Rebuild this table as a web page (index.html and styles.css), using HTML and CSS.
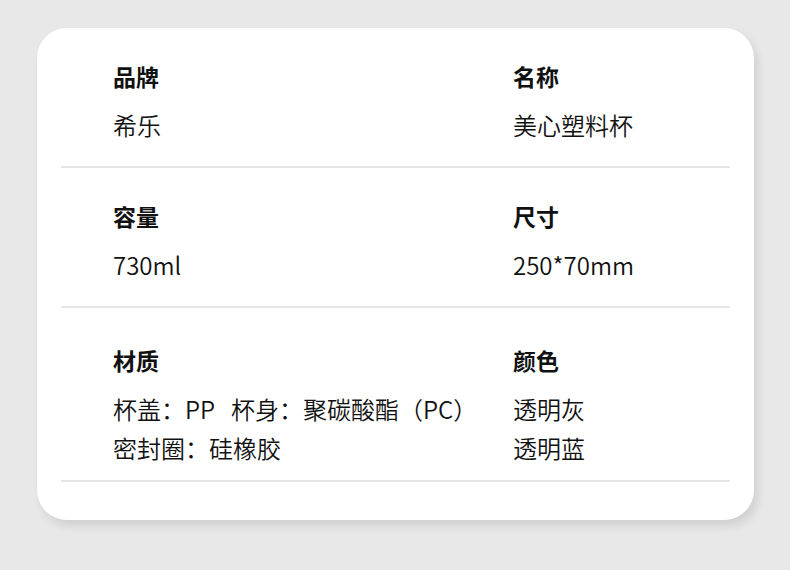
FILE: index.html
```html
<!DOCTYPE html>
<html lang="zh-CN">
<head>
<meta charset="utf-8">
<link rel="stylesheet" href="styles.css">
</head>
<body>
<div class="card">
  <section class="row row1">
    <div class="cell">
      <div class="label">品牌</div>
      <div class="value">希乐</div>
    </div>
    <div class="cell">
      <div class="label">名称</div>
      <div class="value">美心塑料杯</div>
    </div>
  </section>
  <section class="row row2">
    <div class="cell">
      <div class="label">容量</div>
      <div class="value">730ml</div>
    </div>
    <div class="cell">
      <div class="label">尺寸</div>
      <div class="value">250*70mm</div>
    </div>
  </section>
  <section class="row row3">
    <div class="cell">
      <div class="label">材质</div>
      <div class="value multi">杯盖：PP<span class="gap"></span>杯身：聚碳酸酯（PC）<br>密封圈：硅橡胶</div>
    </div>
    <div class="cell">
      <div class="label">颜色</div>
      <div class="value multi">透明灰<br>透明蓝</div>
    </div>
  </section>
</div>
</body>
</html>
```

FILE: styles.css
```css
html, body {
  margin: 0;
  padding: 0;
}
body {
  background: #e8e8e8;
  width: 790px;
  height: 570px;
  overflow: hidden;
  font-family: "Noto Sans CJK SC", "Noto Sans", sans-serif;
  color: #1a1a1a;
}
.card {
  margin: 28px 0 0 37px;
  width: 717px;
  height: 492px;
  box-sizing: border-box;
  background: #ffffff;
  border-radius: 30px;
  box-shadow: 4px 6px 10px rgba(0, 0, 0, 0.10);
  padding: 0 24px;
}
.row {
  display: grid;
  grid-template-columns: 400px 1fr;
  padding-left: 52px;
  border-bottom: 2px solid #e6e6e6;
  box-sizing: border-box;
}
.row1 {
  padding-top: 33px;
  height: 140px;
}
.row2 {
  padding-top: 33px;
  height: 140px;
}
.row3 {
  padding-top: 37px;
  height: 174px;
}
.label {
  font-size: 23px;
  font-weight: 700;
  line-height: 30px;
  color: #111111;
}
.value {
  margin-top: 19px;
  font-size: 24px;
  font-weight: 350;
  line-height: 30px;
  color: #111111;
}
.value.multi {
  margin-top: 14px;
  line-height: 39px;
}
.gap {
  display: inline-block;
  width: 16px;
}
```
